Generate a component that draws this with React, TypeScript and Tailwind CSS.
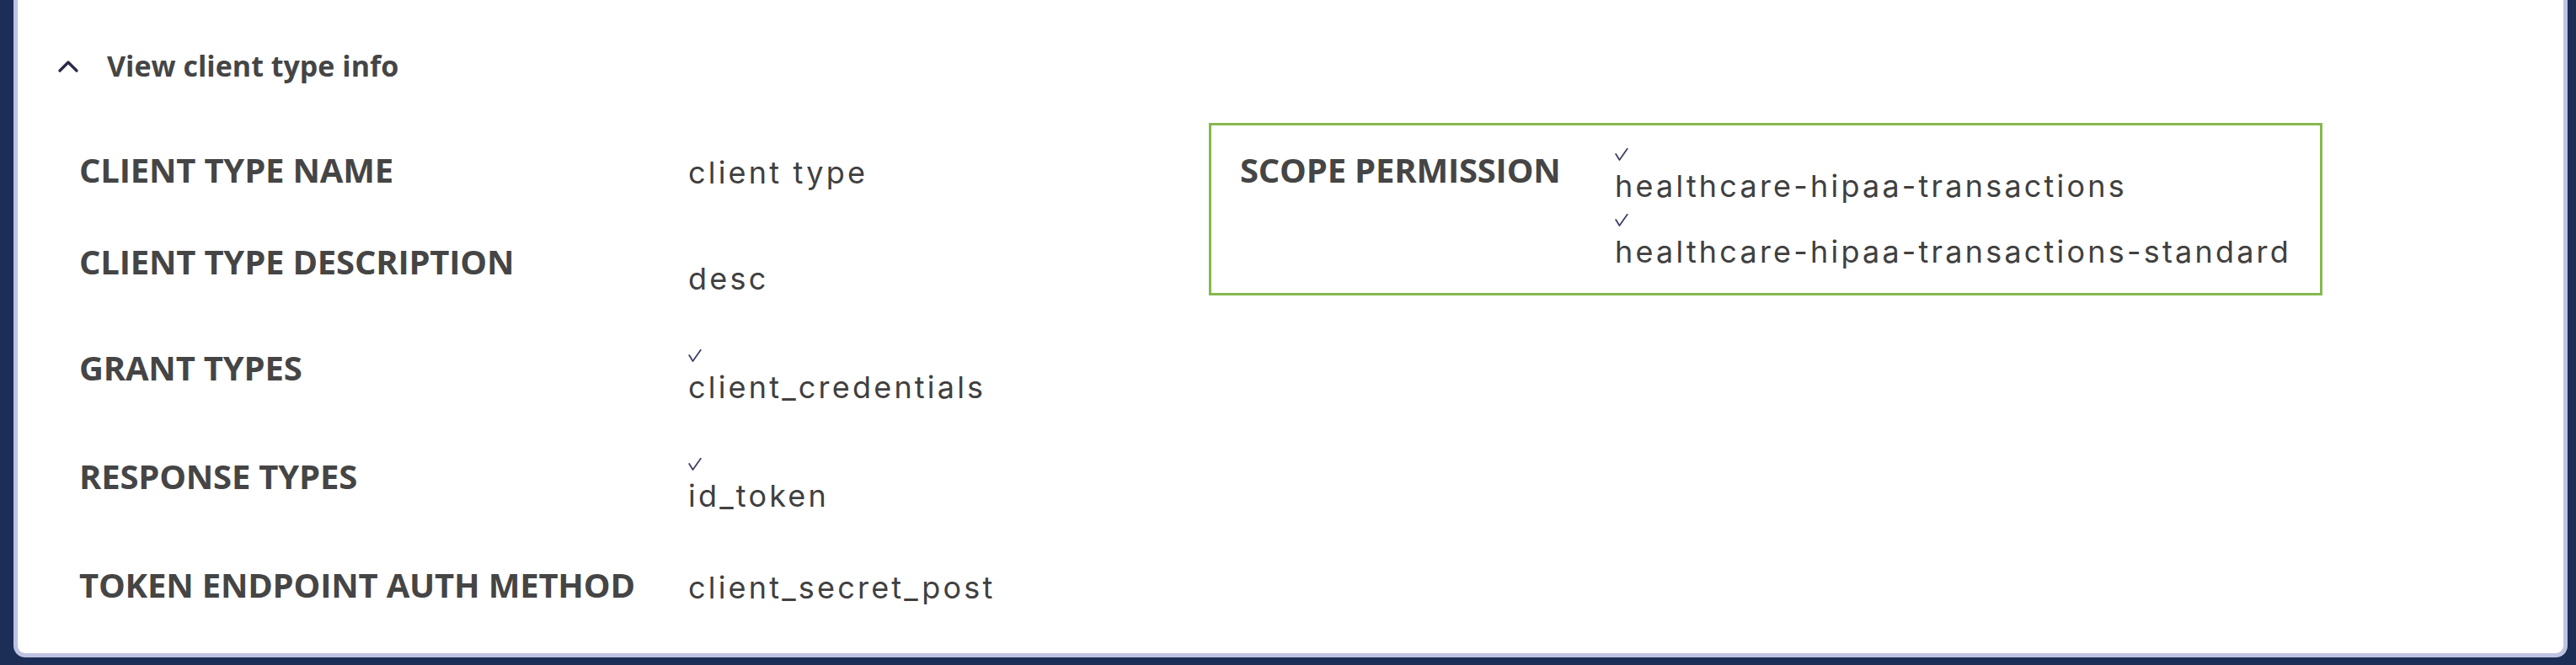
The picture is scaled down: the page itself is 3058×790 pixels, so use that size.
import React from "react";

const labelCls = "font-['Open_Sans',sans-serif] font-bold text-[40px] leading-[48px] text-[#454545] tracking-[-0.2px]";
const valueCls = "font-['Inter',sans-serif] text-[36px] leading-[44px] tracking-[3.2px] text-[#404040]";

type Row = { label: string; values: string[]; checked?: boolean; offset: string };

const rows: Row[] = [
  { label: "CLIENT TYPE NAME", values: ["client type"], offset: "mt-[5px]" },
  { label: "CLIENT TYPE DESCRIPTION", values: ["desc"], offset: "mt-[22px]" },
  { label: "GRANT TYPES", values: ["client_credentials"], checked: true, offset: "mt-[-3px]" },
  { label: "RESPONSE TYPES", values: ["id_token"], checked: true, offset: "mt-[-3px]" },
  { label: "TOKEN ENDPOINT AUTH METHOD", values: ["client_secret_post"], offset: "mt-[5px]" },
];

const scopes = ["healthcare-hipaa-transactions", "healthcare-hipaa-transactions-standard"];

const ChevronUp = () => (
  <svg width="26" height="18" viewBox="0 0 26 18" fill="none" className="shrink-0">
    <path d="M3 15 L13 5 L23 15" stroke="#2b2b4b" strokeWidth="3.4" strokeLinecap="round" strokeLinejoin="round" />
  </svg>
);

const Check = ({ className }: { className: string }) => (
  <svg width="16" height="15" viewBox="0 0 16 15" fill="none" className={`block ${className}`}>
    <path d="M1.2 7 L5.5 14 L14.8 0.8" stroke="#3f3f68" strokeWidth="1.8" strokeLinecap="round" strokeLinejoin="round" />
  </svg>
);

const DetailRow = ({ row }: { row: Row }) => (
  <div className="flex items-start">
    <div className={`w-[723px] shrink-0 ${labelCls}`}>{row.label}</div>
    <div className={`flex flex-col ${row.offset}`}>
      {row.values.map((v) => (
        <div key={v} className="flex flex-col">
          {row.checked && <Check className="mt-[5px] mb-[8px]" />}
          <span className={valueCls}>{v}</span>
        </div>
      ))}
    </div>
  </div>
);

export default function App() {
  return (
    <div className="w-[3058px] h-[790px] bg-[#1c2d56] pl-[16px] pr-[10px] pb-[9px]">
      <div className="h-full bg-white border-x-[5px] border-b-[5px] border-[#bfc3e0] rounded-b-[14px] pl-[47px] pt-[56px]">
        <div className="flex items-center gap-[33px]">
          <ChevronUp />
          <span className="font-['Open_Sans',sans-serif] font-bold text-[34px] leading-[44px] text-[#454545]">
            View client type info
          </span>
        </div>

        <div className="flex items-start pl-[26px] mt-[78px]">
          <div className="w-[1341px] shrink-0 flex flex-col gap-[60px]">
            {rows.map((r) => (
              <DetailRow key={r.label} row={r} />
            ))}
          </div>

          <div className="-mt-[32px] w-[1322px] border-[3px] border-[#86b84f] flex items-start pl-[34px] pt-[16px] pb-[27px]">
            <div className={`w-[445px] shrink-0 mt-[13px] ${labelCls}`}>SCOPE PERMISSION</div>
            <div className="flex flex-col">
              {scopes.map((s) => (
                <div key={s} className="flex flex-col">
                  <Check className="mt-[11px] mb-[8px]" />
                  <span className={valueCls}>{s}</span>
                </div>
              ))}
            </div>
          </div>
        </div>
      </div>
    </div>
  );
}
